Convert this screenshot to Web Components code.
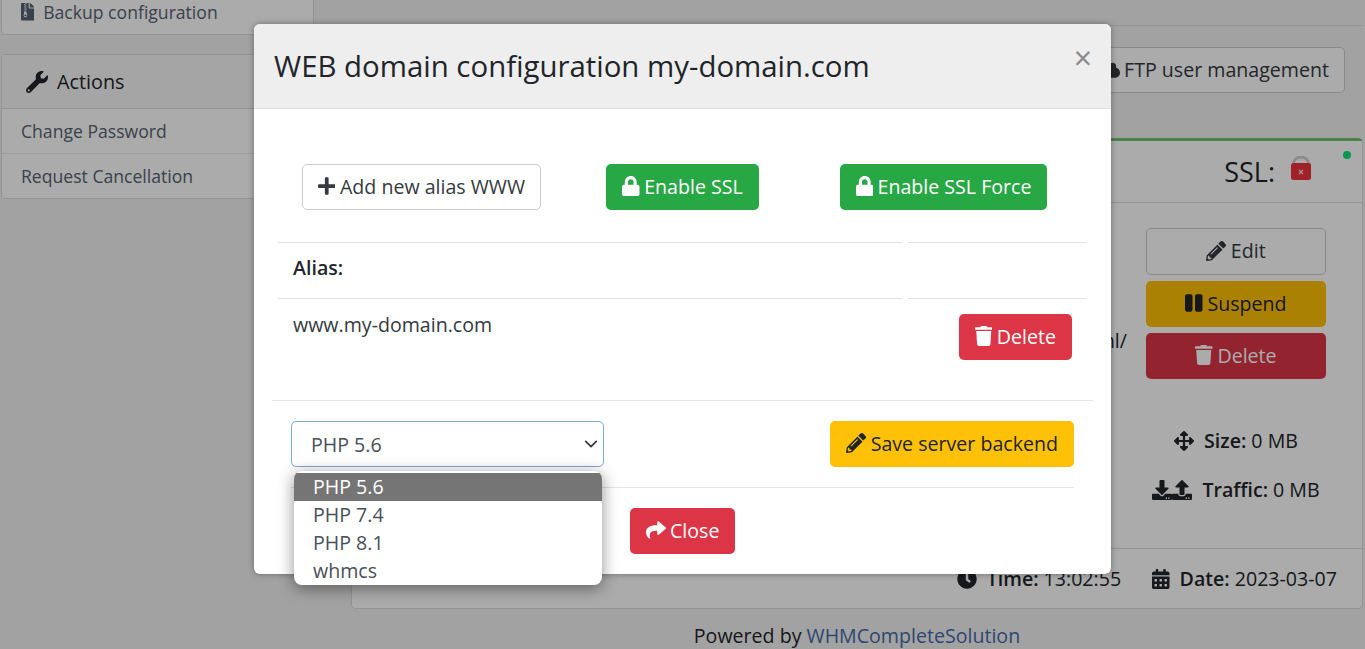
<!DOCTYPE html>
<html lang="en">
<head>
<meta charset="utf-8">
<title>WEB domain configuration</title>
<style>
  html, body { margin: 0; padding: 0; height: 100%; overflow: hidden; }
  body { font-family: "Open Sans", "DejaVu Sans", sans-serif; font-size: 19.6px; color: #212529; background: #f2f2f2; }
</style>
</head>
<body>
<app-page></app-page>

<script>
const ICONS = {
  plus: [448, "M416 208H272V64c0-17.67-14.33-32-32-32h-32c-17.67 0-32 14.33-32 32v144H32c-17.67 0-32 14.33-32 32v32c0 17.67 14.33 32 32 32h144v144c0 17.67 14.33 32 32 32h32c17.67 0 32-14.33 32-32V304h144c17.67 0 32-14.33 32-32v-32c0-17.67-14.33-32-32-32z"],
  lock: [448, "M400 224h-24v-72C376 68.2 307.8 0 224 0S72 68.2 72 152v72H48c-26.5 0-48 21.5-48 48v192c0 26.5 21.5 48 48 48h352c26.5 0 48-21.5 48-48V272c0-26.5-21.5-48-48-48zm-104 0H152v-72c0-39.7 32.3-72 72-72s72 32.3 72 72v72z"],
  trash: [448, "M432 32H312l-9.4-18.7A24 24 0 0 0 281.1 0H166.8a23.72 23.72 0 0 0-21.4 13.3L136 32H16A16 16 0 0 0 0 48v32a16 16 0 0 0 16 16h416a16 16 0 0 0 16-16V48a16 16 0 0 0-16-16zM53.2 467a48 48 0 0 0 47.9 45h245.8a48 48 0 0 0 47.9-45L416 128H32z"],
  pencil: [512, "M497.9 142.1l-46.1 46.1c-4.7 4.7-12.3 4.7-17 0l-111-111c-4.7-4.7-4.7-12.3 0-17l46.1-46.1c18.7-18.7 49.1-18.7 67.9 0l60.1 60.1c18.8 18.7 18.8 49.1 0 67.9zM284.2 99.8L21.6 362.4.4 483.9c-2.9 16.4 11.4 30.6 27.8 27.8l121.5-21.3 262.6-262.6c4.7-4.7 4.7-12.3 0-17l-111-111c-4.8-4.7-12.4-4.7-17.1 0zM124.1 339.9c-5.5-5.5-5.5-14.3 0-19.8l154-154c5.5-5.5 14.3-5.5 19.8 0s5.5 14.3 0 19.8l-154 154c-5.5 5.5-14.3 5.5-19.8 0zM88 424h48v36.3l-64.5 11.3-31.1-31.1L51.7 376H88v48z"],
  pause: [448, "M144 479H48c-26.5 0-48-21.5-48-48V79c0-26.5 21.5-48 48-48h96c26.5 0 48 21.5 48 48v352c0 26.5-21.5 48-48 48zm304-48V79c0-26.5-21.5-48-48-48h-96c-26.5 0-48 21.5-48 48v352c0 26.5 21.5 48 48 48h96c26.5 0 48-21.5 48-48z"],
  share: [512, "M503.691 189.836L327.687 37.851C312.281 24.546 288 35.347 288 56.015v80.053C127.371 137.907 0 170.1 0 322.326c0 61.441 39.581 122.309 83.333 154.132 13.653 9.931 33.111-2.533 28.077-18.631C66.066 312.814 132.917 274.316 288 272.085V360c0 20.7 24.3 31.453 39.687 18.164l176.004-152c11.071-9.562 11.086-26.753 0-36.328z"],
  wrench: [512, "M507.73 109.1c-2.24-9.03-13.54-12.09-20.12-5.51l-74.36 74.36-67.88-11.31-11.31-67.88 74.36-74.36c6.62-6.62 3.43-17.9-5.66-20.16-47.38-11.74-99.55.91-136.58 37.93-39.64 39.64-50.55 97.1-34.05 147.2L18.74 402.76c-24.99 24.99-24.99 65.51 0 90.5 24.99 24.99 65.51 24.99 90.5 0l213.21-213.21c50.12 16.71 107.47 5.68 147.37-34.22 37.07-37.07 49.7-89.32 37.91-136.73zM64 472c-13.25 0-24-10.75-24-24 0-13.26 10.75-24 24-24s24 10.74 24 24c0 13.25-10.75 24-24 24z"],
  arrows: [512, "M352.201 425.775l-79.196 79.196c-9.373 9.373-24.568 9.373-33.941 0l-79.196-79.196c-15.119-15.119-4.411-40.971 16.971-40.97h51.162L228 284H127.196v51.162c0 21.382-25.851 32.09-40.971 16.971L7.029 272.937c-9.373-9.373-9.373-24.569 0-33.941L86.225 159.8c15.119-15.119 40.971-4.411 40.971 16.971V228H228V127.196h-51.23c-21.382 0-32.09-25.851-16.971-40.971l79.196-79.196c9.373-9.373 24.568-9.373 33.941 0l79.196 79.196c15.119 15.119 4.411 40.971-16.971 40.971h-51.162V228h100.804v-51.162c0-21.382 25.851-32.09 40.97-16.971l79.196 79.196c9.373 9.373 9.373 24.569 0 33.941L425.773 352.2c-15.119 15.119-40.971 4.411-40.97-16.971V284H284v100.804h51.23c21.382 0 32.09 25.851 16.971 40.971z"],
  download: [512, "M216 0h80c13.3 0 24 10.7 24 24v168h87.7c17.8 0 26.7 21.5 14.1 34.1L269.7 378.3c-7.5 7.5-19.8 7.5-27.3 0L90.1 226.1c-12.6-12.6-3.7-34.1 14.1-34.1H192V24c0-13.3 10.7-24 24-24zm296 376v112c0 13.3-10.7 24-24 24H24c-13.3 0-24-10.7-24-24V376c0-13.3 10.7-24 24-24h146.7l49 49c20.1 20.1 52.5 20.1 72.6 0l49-49H488c13.3 0 24 10.7 24 24zm-124 88c0-11-9-20-20-20s-20 9-20 20 9 20 20 20 20-9 20-20zm64 0c0-11-9-20-20-20s-20 9-20 20 9 20 20 20 20-9 20-20z"],
  upload: [512, "M296 384h-80c-13.3 0-24-10.7-24-24V192h-87.7c-17.8 0-26.7-21.5-14.1-34.1L242.3 5.7c7.5-7.5 19.8-7.5 27.3 0l152.2 152.2c12.6 12.6 3.7 34.1-14.1 34.1H320v168c0 13.3-10.7 24-24 24zm216-8v112c0 13.3-10.7 24-24 24H24c-13.3 0-24-10.7-24-24V376c0-13.3 10.7-24 24-24h136v8c0 30.9 25.1 56 56 56h80c30.9 0 56-25.1 56-56v-8h136c13.3 0 24 10.7 24 24zm-124 88c0-11-9-20-20-20s-20 9-20 20 9 20 20 20 20-9 20-20zm64 0c0-11-9-20-20-20s-20 9-20 20 9 20 20 20 20-9 20-20z"],
  clock: [512, "M256,8C119,8,8,119,8,256S119,504,256,504,504,393,504,256,393,8,256,8Zm92.49,313h0l-20,25a16,16,0,0,1-22.49,2.5h0l-67-49.72a40,40,0,0,1-15-31.23V112a16,16,0,0,1,16-16h32a16,16,0,0,1,16,16V256l58,42.5A16,16,0,0,1,348.49,321Z"],
  calendar: [448, "M0 464c0 26.5 21.5 48 48 48h352c26.5 0 48-21.5 48-48V192H0v272zm320-196c0-6.6 5.4-12 12-12h40c6.6 0 12 5.4 12 12v40c0 6.6-5.4 12-12 12h-40c-6.6 0-12-5.4-12-12v-40zm0 128c0-6.6 5.4-12 12-12h40c6.6 0 12 5.4 12 12v40c0 6.6-5.4 12-12 12h-40c-6.6 0-12-5.4-12-12v-40zM192 268c0-6.6 5.4-12 12-12h40c6.6 0 12 5.4 12 12v40c0 6.6-5.4 12-12 12h-40c-6.6 0-12-5.4-12-12v-40zm0 128c0-6.6 5.4-12 12-12h40c6.6 0 12 5.4 12 12v40c0 6.6-5.4 12-12 12h-40c-6.6 0-12-5.4-12-12v-40zM64 268c0-6.6 5.4-12 12-12h40c6.6 0 12 5.4 12 12v40c0 6.6-5.4 12-12 12H76c-6.6 0-12-5.4-12-12v-40zm0 128c0-6.6 5.4-12 12-12h40c6.6 0 12 5.4 12 12v40c0 6.6-5.4 12-12 12H76c-6.6 0-12-5.4-12-12v-40zM400 64h-48V16c0-8.8-7.2-16-16-16h-32c-8.8 0-16 7.2-16 16v48H160V16c0-8.8-7.2-16-16-16h-32c-8.8 0-16 7.2-16 16v48H48C21.5 64 0 85.5 0 112v48h448v-48c0-26.5-21.5-48-48-48z"],
  archive: [384, "M377 105L279.1 7c-4.5-4.5-10.6-7-17-7H256v128h128v-6.1c0-6.3-2.5-12.4-7-16.9zM128.4 336c-17.9 0-32.4 12.1-32.4 27 0 15 14.6 27 32.5 27s32.4-12.1 32.4-27-14.6-27-32.5-27zM224 136V0h-63.6v32h-32V0H24C10.7 0 0 10.7 0 24v464c0 13.3 10.7 24 24 24h336c13.3 0 24-10.7 24-24V160H248c-13.2 0-24-10.8-24-24zM95.9 32h32v32h-32zm32.3 384c-33.2 0-58-30.4-51.4-62.9L96.4 256v-32h32v-32h-32v-32h32v-32h-32V96h32V64h32v32h-32v32h32v32h-32v32h32v32h-32v32h22.1c5.7 0 10.7 4.1 11.8 9.7l17.3 87.7c6.4 32.4-18.4 62.6-51.4 62.6z"],
  cloud: [640, "M537.6 226.6c4.1-10.7 6.4-22.4 6.4-34.6 0-53-43-96-96-96-19.7 0-38.1 6-53.3 16.2C367 64.2 315.3 32 256 32c-88.4 0-160 71.6-160 160 0 2.7.1 5.4.2 8.1C40.2 219.8 0 273.2 0 336c0 79.5 64.5 144 144 144h368c70.7 0 128-57.3 128-128 0-61.9-44-113.6-102.4-125.4z"]
};

class FaIcon extends HTMLElement {
  connectedCallback() {
    const [w, d] = ICONS[this.getAttribute("name")];
    this.attachShadow({ mode: "open" }).innerHTML = `
    <style>
      :host { display: inline-flex; flex: none; font-size: 20px; }
      svg { height: 1em; width: auto; display: block; fill: currentColor; }
    </style>
    <svg viewBox="0 0 ${w} 512"><path d="${d}"/></svg>`;
  }
}
customElements.define("fa-icon", FaIcon);

class UiBtn extends HTMLElement {
  constructor() {
    super();
    this.attachShadow({ mode: "open" });
  }
  connectedCallback() {
    const icon = this.getAttribute("icon");
    this.shadowRoot.innerHTML = `
    <style>
      :host {
        display: inline-flex; align-items: center; justify-content: center; gap: 4.5px;
        box-sizing: border-box; height: 46px; padding: 0 15px 2px;
        border: 1px solid transparent; border-radius: 5px;
        font-size: 19.6px; line-height: 27px; white-space: nowrap;
      }
      :host([variant="light"]) { background: #fff; border-color: #ccc; color: #343a40; }
      :host([variant="success"]) { background: #28a745; color: #fff; }
      :host([variant="danger"]) { background: #dc3545; color: #fff; }
      :host([variant="warning"]) { background: #ffc107; color: #212529; }
    </style>
    ${icon ? `<fa-icon name="${icon}"></fa-icon>` : ""}<slot></slot>`;
  }
}
customElements.define("ui-btn", UiBtn);

class SidePanel extends HTMLElement {
  constructor() {
    super();
    this.attachShadow({ mode: "open" }).innerHTML = `
    <style>
      :host {
        display: block; box-sizing: border-box; background: #fff;
        border: 1px solid #dcdcdc; border-radius: 4px;
      }
    </style>
    <slot></slot>`;
  }
}
customElements.define("side-panel", SidePanel);

class SideItem extends HTMLElement {
  constructor() {
    super();
    this.attachShadow({ mode: "open" }).innerHTML = `
    <style>
      :host {
        display: flex; align-items: center; gap: 9px; box-sizing: border-box; height: 45px;
        padding: 0 19px; color: #566273; font-size: 17.6px; border-top: 1px solid #ececec;
      }
      :host([head]) {
        height: 54px; padding: 0 24px; gap: 9px; font-size: 19.8px; color: #212529;
        border-top: 0; border-bottom: 1px solid #dcdcdc; background: #f7f7f7;
      }
      :host([first]) { border-top: 0; height: 44px; }
    </style>
    <slot></slot>`;
  }
}
customElements.define("side-item", SideItem);

class StatLine extends HTMLElement {
  constructor() {
    super();
    this.attachShadow({ mode: "open" }).innerHTML = `
    <style>
      :host { display: flex; align-items: center; white-space: nowrap; font-size: 19.6px; line-height: 27px; color: #212529; }
      .icons { display: flex; margin-right: 10px; }
      b { font-weight: 600; margin-right: 5px; }
    </style>
    <span class="icons"><slot name="icon"></slot></span><b><slot name="label"></slot></b><slot></slot>`;
  }
}
customElements.define("stat-line", StatLine);

class ServiceCard extends HTMLElement {
  constructor() {
    super();
    this.attachShadow({ mode: "open" }).innerHTML = `
    <style>
      :host {
        display: flex; flex-direction: column; box-sizing: border-box; position: relative; height: 471px;
        background: #fff; border: 1px solid #dcdcdc; border-top: 3px solid #6fc06f; border-radius: 5px;
      }
      header {
        display: flex; justify-content: flex-end; align-items: center; gap: 15px;
        height: 62px; box-sizing: border-box; border-bottom: 1px solid #dcdcdc; padding: 0 50px 0 0;
        font-size: 27px; background: #fff;
      }
      .dot { position: absolute; top: 10px; right: 11px; width: 8px; height: 8px; border-radius: 50%; background: #00e676; }
      .ssl { display: block; width: 22px; height: 24px; margin-top: -7px; }
      .body { flex: 1; display: grid; grid-template-columns: 1fr 180px; column-gap: 19px; padding: 25px 36px 0 0; }
      .path { text-align: right; padding-top: 99px; font-size: 19.6px; line-height: 27px; color: #212529; }
      .side { display: flex; flex-direction: column; align-items: stretch; gap: 6px; }
      .side ui-btn { width: 100%; }
      .side ui-btn:first-child { height: 47px; }
      .stats { display: flex; flex-direction: column; align-items: center; gap: 22px; margin-top: 48px; }
      footer {
        display: flex; justify-content: flex-end; align-items: center; gap: 31px;
        box-sizing: border-box; height: 60px; padding-right: 25px; border-top: 1px solid #dcdcdc;
      }
    </style>
    <i class="dot"></i>
    <header>
      <span>SSL:</span>
      <svg class="ssl" viewBox="0 0 22 24">
        <path d="M3.500 9V7.500a7.500 6.500 0 0 1 15 0V9" fill="none" stroke="#cfcfcf" stroke-width="2.800"/>
        <rect x="1" y="7" width="20" height="17" rx="2.500" fill="#ef323c"/>
        <path d="M9 14l4 4m0-4l-4 4" stroke="#f8d8d8" stroke-width="1.300"/>
      </svg>
    </header>
    <div class="body">
      <div class="path">html/</div>
      <div>
        <div class="side">
          <ui-btn variant="light" icon="pencil">Edit</ui-btn>
          <ui-btn variant="warning" icon="pause">Suspend</ui-btn>
          <ui-btn variant="danger" icon="trash">Delete</ui-btn>
        </div>
        <div class="stats">
          <stat-line><fa-icon slot="icon" name="arrows"></fa-icon><span slot="label">Size:</span>0 MB</stat-line>
          <stat-line><fa-icon slot="icon" name="download"></fa-icon><fa-icon slot="icon" name="upload"></fa-icon><span slot="label">Traffic:</span>0 MB</stat-line>
        </div>
      </div>
    </div>
    <footer>
      <stat-line><fa-icon slot="icon" name="clock"></fa-icon><span slot="label">Time:</span>13:02:55</stat-line>
      <stat-line><fa-icon slot="icon" name="calendar"></fa-icon><span slot="label">Date:</span>2023-03-07</stat-line>
    </footer>`;
  }
}
customElements.define("service-card", ServiceCard);

class PhpSelect extends HTMLElement {
  constructor() {
    super();
    this.attachShadow({ mode: "open" }).innerHTML = `
    <style>
      :host { display: block; position: relative; width: 313px; font-size: 19.6px; color: #495057; }
      .field {
        display: flex; align-items: center; justify-content: space-between; box-sizing: border-box; height: 46px;
        padding: 0 5px 0 19px; border: 1px solid #80a9d4; border-radius: 5px; background: #fff;
      }
      .field svg { width: 14px; height: 14px; display: block; }
      ul {
        position: absolute; left: 3px; top: 50px; width: 308px; margin: 0; padding: 2px 0 0; box-sizing: border-box;
        list-style: none; background: #fff; border-radius: 8px; overflow: hidden; z-index: 2;
        box-shadow: 0 3px 16px rgba(0,0,0,.45);
      }
      li { height: 28px; line-height: 28px; padding-left: 19px; color: #495057; }
      li.on { background: #757575; color: #fff; }
    </style>
    <div class="field">
      <span>PHP 5.6</span>
      <svg viewBox="0 0 16 16"><path d="M2 5l6 6 6-6" fill="none" stroke="#343a40" stroke-width="2" stroke-linecap="round" stroke-linejoin="round"/></svg>
    </div>
    <ul>
      <li class="on">PHP 5.6</li>
      <li>PHP 7.4</li>
      <li>PHP 8.1</li>
      <li>whmcs</li>
    </ul>`;
  }
}
customElements.define("php-select", PhpSelect);

class DomainModal extends HTMLElement {
  constructor() {
    super();
    this.attachShadow({ mode: "open" }).innerHTML = `
    <style>
      :host {
        display: block; position: absolute; left: 254px; top: 24px; width: 857px; height: 550px; z-index: 3;
        background: #fff; border-radius: 6px; box-shadow: 0 0 6px rgba(0,0,0,.35); color: #212529;
      }
      header {
        display: flex; align-items: center; justify-content: space-between; box-sizing: border-box; height: 85px;
        padding: 0 20px; background: #eee; border-bottom: 1px solid #dee2e6; border-radius: 6px 6px 0 0;
      }
      h4 { margin: 0; font-size: 29.4px; font-weight: 400; line-height: 84px; }
      .x { font-size: 32px; font-weight: 500; line-height: 1; color: #8a8a8a; margin: -16px -1px 0 0; }
      .body { padding: 55px 18px 0; }
      .row { display: grid; grid-template-columns: repeat(3, 261px); margin: 0 19px; justify-items: center; }
      table { width: 821px; margin: 32px 0 0; border-collapse: separate; border-spacing: 6px 0; table-layout: fixed; font-size: 19.6px; }
      td, th { border-top: 1px solid #dee2e6; padding: 0 15px; text-align: left; }
      th { height: 56px; font-weight: 600; padding-bottom: 6px; box-sizing: border-box; }
      td { height: 102px; vertical-align: top; padding-top: 12px; box-sizing: border-box; color: #343a40; }
      td:last-child { text-align: right; padding-top: 15px; }
      .name { width: 624px; box-sizing: border-box; }
      .sep { height: 1px; background: #e4e4e4; border: 0; margin: 0; }
      .backend { display: flex; justify-content: space-between; margin: 20px 19px; }
      .sep2 { height: 1px; background: #e4e4e4; margin: 0 19px; }
      .foot { margin-top: 20px; }
    </style>
    <header>
      <h4>WEB domain configuration my-domain.com</h4>
      <span class="x">×</span>
    </header>
    <div class="body">
      <div class="row">
        <ui-btn variant="light" icon="plus">Add new alias WWW</ui-btn>
        <ui-btn variant="success" icon="lock">Enable SSL</ui-btn>
        <ui-btn variant="success" icon="lock">Enable SSL Force</ui-btn>
      </div>
      <table>
        <tr><th class="name">Alias:</th><th></th></tr>
        <tr><td>www.my-domain.com</td><td><ui-btn variant="danger" icon="trash">Delete</ui-btn></td></tr>
      </table>
      <hr class="sep">
      <div class="backend">
        <php-select></php-select>
        <ui-btn variant="warning" icon="pencil">Save server backend</ui-btn>
      </div>
      <div class="sep2"></div>
      <div class="row foot">
        <span></span>
        <ui-btn variant="danger" icon="share">Close</ui-btn>
      </div>
    </div>`;
  }
}
customElements.define("domain-modal", DomainModal);

class AppPage extends HTMLElement {
  constructor() {
    super();
    this.attachShadow({ mode: "open" }).innerHTML = `
    <style>
      :host { display: grid; grid-template-columns: 314px 1fr; position: relative; height: 649px; overflow: hidden; background: #f2f2f2; }
      .sidebar { padding-left: 1px; display: flex; flex-direction: column; gap: 19px; margin-top: -11px; }
      .sidebar side-panel:first-child fa-icon { font-size: 17.6px; }
      .sidebar side-item[head] fa-icon { font-size: 22px; }
      .main { display: flex; flex-direction: column; }
      .title { height: 25px; margin-right: 2px; border-bottom: 1px solid #dcdcdc; flex: none; }
      .tools { display: flex; justify-content: flex-end; margin: 21px 20px 0 0; }
      service-card { margin: 45px 2px 0 37px; flex: none; }
      .powered { text-align: center; margin: 13px 2px 0 37px; font-size: 19.6px; }
      .powered a { color: #446ba8; text-decoration: none; }
      .backdrop { position: absolute; inset: 0; background: rgba(0,0,0,.33); z-index: 2; }
    </style>
    <div class="sidebar">
      <side-panel>
        <side-item first><fa-icon name="archive"></fa-icon>Backup configuration</side-item>
      </side-panel>
      <side-panel>
        <side-item head><fa-icon name="wrench"></fa-icon>Actions</side-item>
        <side-item first>Change Password</side-item>
        <side-item>Request Cancellation</side-item>
      </side-panel>
    </div>
    <div class="main">
      <div class="title"></div>
      <div class="tools"><ui-btn variant="light" icon="cloud">FTP user management</ui-btn></div>
      <service-card></service-card>
      <div class="powered">Powered by <a>WHMCompleteSolution</a></div>
    </div>
    <div class="backdrop"></div>
    <domain-modal></domain-modal>`;
  }
}
customElements.define("app-page", AppPage);
</script>
</body>
</html>
